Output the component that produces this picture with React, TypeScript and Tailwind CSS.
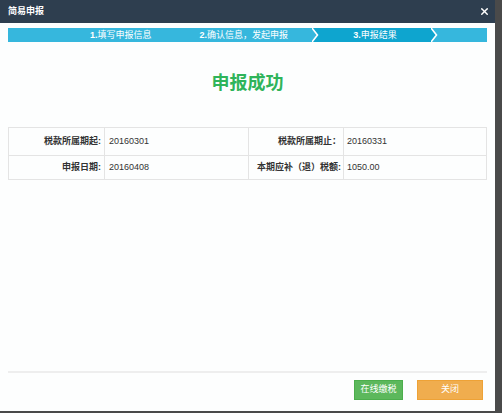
import { X } from 'lucide-react';

const rows = [
  { l1: '税款所属期起:', v1: '20160301', l2: '税款所属期止：', v2: '20160331' },
  { l1: '申报日期:', v1: '20160408', l2: '本期应补（退）税额:', v2: '1050.00' },
];

function Chevron({ left, right }: { left: string; right: string }) {
  return (
    <svg width="7" height="14" viewBox="0 0 7 14" className="block shrink-0">
      <rect x="0" y="0" width="7" height="14" fill={left} />
      <polygon points="0,0 7,0 7,14 0,14 5.5,7" fill={right} />
      <polyline points="0,0 5.5,7 0,14" fill="none" stroke="#fff" strokeWidth="1.6" />
    </svg>
  );
}

export default function App() {
  return (
    <div
      className="w-[502px] h-[413px] bg-[#4a4a4a] overflow-hidden"
      style={{ fontFamily: '"Liberation Sans", "Noto Sans CJK SC", sans-serif' }}
    >
      <div className="w-[495px] h-[411px] bg-[#fdfefe] flex flex-col">
        {/* header */}
        <div className="h-[23px] bg-[#2e3e4f] flex items-center justify-between pl-[8px] pr-[5px] shrink-0">
          <span className="text-white text-[9px] font-bold">简易申报</span>
          <X className="w-[11px] h-[11px] text-white" strokeWidth={3} />
        </div>

        <div className="flex-1 flex flex-col px-[8px] pt-[5px]">
          {/* steps */}
          <div className="h-[14px] w-[479px] bg-[#36b7dd] flex items-center text-white text-[9px] leading-[14px]">
            <div className="w-[304px] flex pl-[82px] gap-[48px]">
              <span><b>1.</b>填写申报信息</span>
              <span><b>2.</b>确认信息，发起申报</span>
            </div>
            <Chevron left="#36b7dd" right="#0ea5cf" />
            <div className="w-[112px] h-full bg-[#0ea5cf] text-center">
              <b>3.</b>申报结果
            </div>
            <Chevron left="#0ea5cf" right="#36b7dd" />
            <div className="flex-1" />
          </div>

          <h1 className="mt-[29px] text-center text-[18px] leading-[24px] font-bold text-[#2fb45a]">申报成功</h1>

          {/* table */}
          <div className="mt-[32px] w-[479px] border border-[#e4e4e4] text-[9px] text-[#333]">
            {rows.map((r, i) => (
              <div
                key={i}
                className={`grid grid-cols-[96px_144px_95px_1fr] ${i === 0 ? 'h-[28px] border-b border-[#e4e4e4]' : 'h-[23px]'}`}
              >
                <div className="flex items-center justify-end pr-[3px] font-bold border-r border-[#e4e4e4]">{r.l1}</div>
                <div className="flex items-center pl-[4px] border-r border-[#e4e4e4]">{r.v1}</div>
                <div className="flex items-center justify-end pr-[2px] font-bold border-r border-[#e4e4e4]">{r.l2}</div>
                <div className="flex items-center pl-[3px]">{r.v2}</div>
              </div>
            ))}
          </div>
        </div>

        {/* footer */}
        <div className="mx-[8px] h-[2px] bg-[#eeeeee] shrink-0" />
        <div className="h-[38px] flex items-start justify-end gap-[14px] pt-[7px] pr-[12px] shrink-0">
          <button className="w-[49px] h-[20px] bg-[#5cb85c] border border-[#4cae4c] text-white text-[9px]">在线缴税</button>
          <button className="w-[66px] h-[20px] bg-[#f0ad4e] border border-[#eea236] text-white text-[9px]">关闭</button>
        </div>
      </div>
    </div>
  );
}
